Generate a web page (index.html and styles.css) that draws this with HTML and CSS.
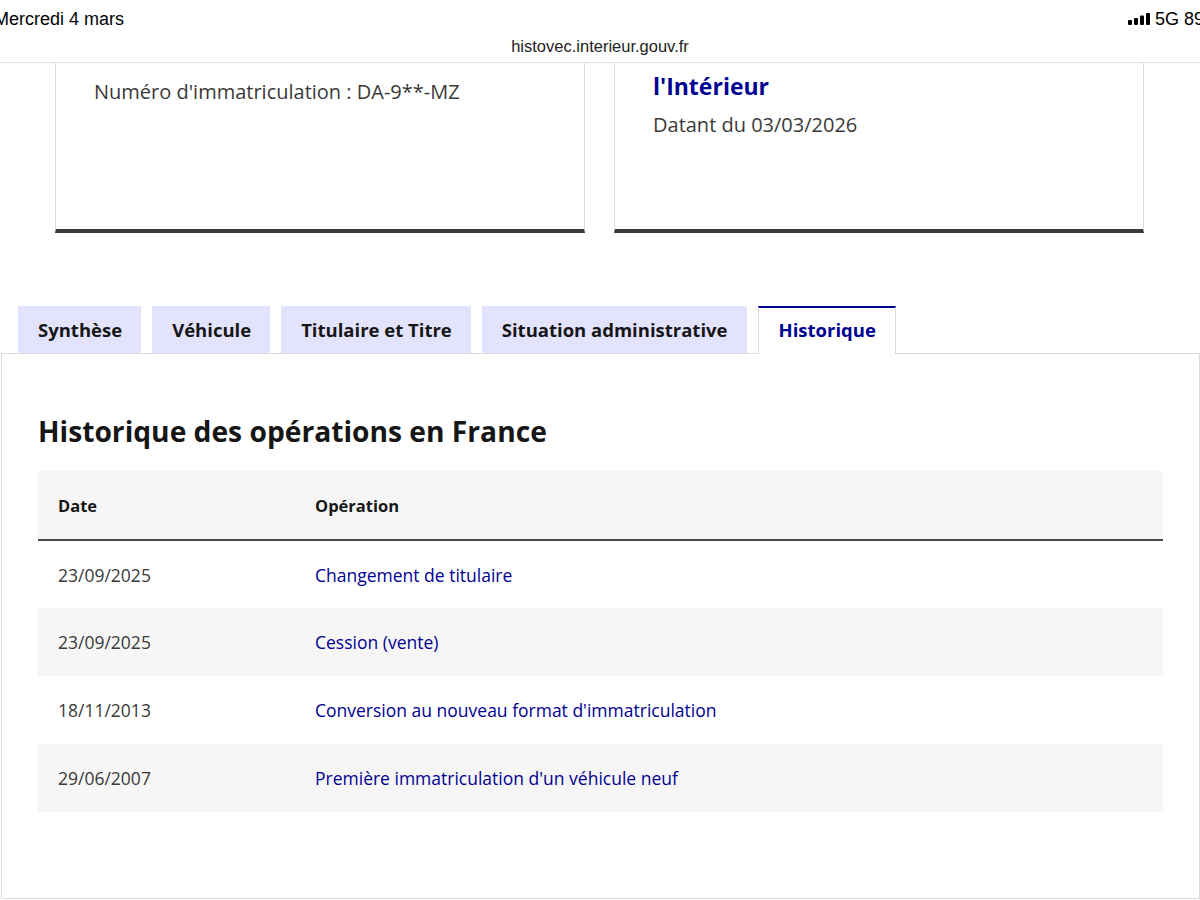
FILE: index.html
```html
<!DOCTYPE html>
<html lang="fr">
<head>
<meta charset="utf-8">
<title>HistoVec</title>
<link rel="stylesheet" href="styles.css">
</head>
<body>
<div class="statusbar">
  <span class="sb-date">Mercredi 4 mars</span>
  <span class="sb-right">
    <svg class="signal" width="22" height="12" viewBox="0 0 22 12"><rect x="0" y="7" width="4" height="5" rx="1"/><rect x="6" y="5" width="4" height="7" rx="1"/><rect x="12" y="2.5" width="4" height="9.5" rx="1"/><rect x="18" y="0" width="4" height="12" rx="1"/></svg>
    <span class="sb-net">5G 89</span>
  </span>
</div>
<div class="urlbar">histovec.interieur.gouv.fr</div>

<div class="cards">
  <div class="card">
    <p class="card-text">Numéro d'immatriculation : DA-9**-MZ</p>
  </div>
  <div class="card">
    <p class="card-title">l'Intérieur</p>
    <p class="card-text">Datant du 03/03/2026</p>
  </div>
</div>

<div class="tabs">
  <div class="tab">Synthèse</div>
  <div class="tab">Véhicule</div>
  <div class="tab">Titulaire et Titre</div>
  <div class="tab">Situation administrative</div>
  <div class="tab tab-active">Historique</div>
</div>
<div class="panel">
  <h2 class="panel-title">Historique des opérations en France</h2>
  <table class="ops">
    <thead>
      <tr><th class="col-date">Date</th><th>Opération</th></tr>
    </thead>
    <tbody>
      <tr><td class="col-date">23/09/2025</td><td class="op">Changement de titulaire</td></tr>
      <tr><td class="col-date">23/09/2025</td><td class="op">Cession (vente)</td></tr>
      <tr><td class="col-date">18/11/2013</td><td class="op">Conversion au nouveau format d'immatriculation</td></tr>
      <tr><td class="col-date">29/06/2007</td><td class="op">Première immatriculation d'un véhicule neuf</td></tr>
    </tbody>
  </table>
</div>
</body>
</html>
```

FILE: styles.css
```css
* { box-sizing: border-box; }
html, body {
  margin: 0;
  padding: 0;
  background: #fff;
  width: 1200px;
  height: 900px;
  overflow: hidden;
}
body {
  font-family: "Open Sans", "Liberation Sans", sans-serif;
  color: #3a3a3a;
}

.statusbar {
  height: 36px;
  display: flex;
  justify-content: space-between;
  align-items: center;
  font-family: "Liberation Sans", Arial, sans-serif;
  font-size: 18px;
  color: #000;
  overflow: hidden;
  padding-top: 2px;
}
.sb-date { margin-left: -6px; }
.sb-right {
  display: flex;
  align-items: center;
  gap: 5px;
  margin-right: -4px;
}
.signal { fill: #000; }

.urlbar {
  height: 27px;
  text-align: center;
  font-family: "Liberation Sans", Arial, sans-serif;
  font-size: 16.5px;
  color: #222;
  line-height: 20px;
  border-bottom: 1px solid #e2e2e2;
}

.cards {
  display: flex;
  gap: 29px;
  padding-left: 55px;
}
.card {
  width: 530px;
  height: 170px;
  border-left: 1px solid #dcdcdc;
  border-right: 1px solid #dcdcdc;
  border-bottom: 4px solid #3a3a3a;
  padding: 8px 38px 0;
}
.card-text {
  margin: 7px 0 0;
  font-size: 20px;
  line-height: 28px;
  color: #3a3a3a;
}
.card-title {
  margin: 0;
  font-size: 23px;
  font-weight: 700;
  line-height: 30px;
  color: #000091;
}
.card-title + .card-text { margin-top: 10px; }

.tabs {
  display: flex;
  gap: 11px;
  padding-left: 18px;
  margin-top: 73px;
  height: 47px;
  align-items: stretch;
}
.tab {
  background: #e3e3fd;
  color: #161616;
  font-weight: 700;
  font-size: 18.5px;
  padding: 0 19px 0 20px;
  display: flex;
  align-items: center;
}
.tab-active {
  background: #fff;
  color: #000091;
  border-top: 2px solid #000091;
  border-left: 1px solid #dcdcdc;
  border-right: 1px solid #dcdcdc;
  height: 48px;
  padding-bottom: 4px;
  position: relative;
  z-index: 1;
}

.panel {
  margin: 0 0 0 1px;
  width: 1199px;
  height: 546px;
  border: 1px solid #dcdcdc;
  padding: 57px 36px 0;
}
.panel-title {
  margin: 0 0 20px;
  font-size: 28.2px;
  font-weight: 700;
  color: #161616;
  line-height: 40px;
}
.ops {
  width: 100%;
  border-collapse: collapse;
  font-size: 17.5px;
}
.ops th {
  background: #f6f6f6;
  text-align: left;
  font-weight: 700;
  font-size: 16.5px;
  color: #161616;
  height: 69px;
  padding: 0 20px;
  border-bottom: 2px solid #4a4a4a;
}
.ops td {
  height: 68px;
  padding: 0 20px;
  color: #3a3a3a;
}
.ops .col-date { width: 257px; }
.ops td.op { color: #000091; }
.ops tbody tr:nth-child(even) td { background: #f6f6f6; }
```
